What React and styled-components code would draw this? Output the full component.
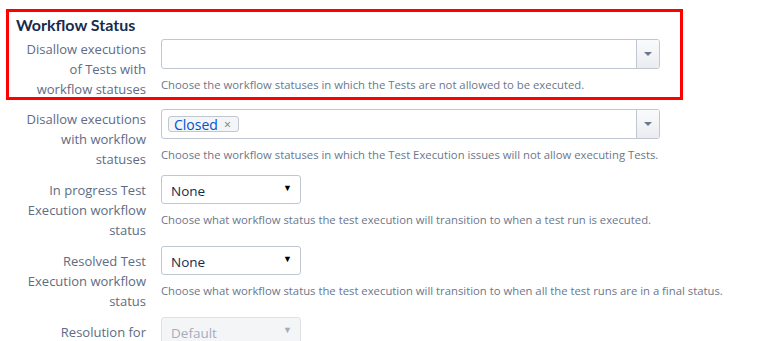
import styled, { createGlobalStyle } from "styled-components"

const GlobalStyle = createGlobalStyle`
  body {
    margin: 0;
    background: #fff;
    font-family: "Open Sans", "Liberation Sans", sans-serif;
    color: #172b4d;
  }
`;

const Form = styled.div`
  display: flex;
  flex-direction: column;
  gap: 6px;
  padding: 9px 0 0 9px;
  width: 780px;
  height: 341px;
  box-sizing: border-box;
  overflow: hidden;
`;

const Highlight = styled.div`
  box-sizing: border-box;
  width: 677px;
  height: 91px;
  margin: 0 0 3px -3px;
  border: 3px solid #ff0000;
`;

const Title = styled.h3`
  margin: 0;
  padding: 3px 0 0 7px;
  font-family: Lato, "Open Sans", sans-serif;
  font-size: 16px;
  font-weight: 700;
  line-height: 20px;
  color: #172b4d;
`;

const Row = styled.div`
  display: grid;
  grid-template-columns: 137px 499px;
  column-gap: 15px;
  margin-top: ${p => p.$top || 0}px;
`;

const Label = styled.label`
  text-align: right;
  font-size: 13px;
  line-height: 20px;
  color: #5e6c84;
  padding-top: ${p => (p.$select ? 5 : 0)}px;
`;

const Field = styled.div`
  display: flex;
  flex-direction: column;
  align-items: flex-start;
`;

const MultiSelect = styled.div`
  box-sizing: border-box;
  width: 499px;
  height: 30px;
  display: flex;
  align-items: center;
  border: 1px solid #c1c7d0;
  border-radius: 3px;
  background: #fff;
`;

const Tags = styled.div`
  flex: 1;
  display: flex;
  align-items: center;
  padding-left: 6px;
`;

const Tag = styled.span`
  display: inline-flex;
  align-items: center;
  gap: 6px;
  height: 16px;
  padding: 0 7px 0 5px;
  box-sizing: border-box;
  border: 1px solid #c1c7d0;
  border-radius: 3px;
  background: #f4f5f7;
  font-size: 14px;
  color: #0052cc;
`;

const TagClose = styled.span`
  font-size: 12px;
  color: #6b778c;
`;

const DropButton = styled.div`
  width: 22px;
  height: 100%;
  border-left: 1px solid #c1c7d0;
  background: linear-gradient(#fafbfc, #ebecf0);
  border-radius: 0 2px 2px 0;
  display: flex;
  align-items: center;
  justify-content: center;
`;

const Caret = styled.span`
  width: 0;
  height: 0;
  border-left: 4px solid transparent;
  border-right: 4px solid transparent;
  border-top: 4px solid #6b778c;
`;

const Select = styled.div`
  box-sizing: border-box;
  width: 140px;
  height: 29px;
  display: flex;
  align-items: center;
  justify-content: space-between;
  padding: 2px 8px 0 9px;
  border: 1px solid ${p => (p.$disabled ? "#dfe1e6" : "#c1c7d0")};
  border-radius: 3px;
  background: ${p => (p.$disabled ? "#f4f5f7" : "#fff")};
  font-size: 13.5px;
  color: ${p => (p.$disabled ? "#a5adba" : "#172b4d")};
`;

const SelectArrow = styled.span`
  font-size: 9px;
  margin-top: -6px;
  color: ${p => (p.$disabled ? "#a5adba" : "#000")};
`;

const Description = styled.div`
  margin-top: 8px;
  font-size: 11.3px;
  line-height: 16px;
  color: #6b778c;
  white-space: nowrap;
`;

const MultiRow = ({ label, tags = [], description, top }) => (
  <Row $top={top}>
    <Label>{label}</Label>
    <Field>
      <MultiSelect>
        <Tags>
          {tags.map(tag => (
            <Tag key={tag}>
              {tag}
              <TagClose>×</TagClose>
            </Tag>
          ))}
        </Tags>
        <DropButton>
          <Caret />
        </DropButton>
      </MultiSelect>
      {description && <Description>{description}</Description>}
    </Field>
  </Row>
);

const SelectRow = ({ label, value, description, disabled }) => (
  <Row>
    <Label $select>{label}</Label>
    <Field>
      <Select $disabled={disabled}>
        {value}
        <SelectArrow $disabled={disabled}>▼</SelectArrow>
      </Select>
      {description && <Description>{description}</Description>}
    </Field>
  </Row>
);

const App = () => {
  return (
    <>
      <GlobalStyle />
      <Form>
        <Highlight>
          <Title>Workflow Status</Title>
          <MultiRow
            top={4}
            label={<>Disallow executions<br />of Tests with<br />workflow statuses</>}
            description="Choose the workflow statuses in which the Tests are not allowed to be executed."
          />
        </Highlight>
        <MultiRow
          label={<>Disallow executions<br />with workflow<br />statuses</>}
          tags={["Closed"]}
          description="Choose the workflow statuses in which the Test Execution issues will not allow executing Tests."
        />
        <SelectRow
          label={<>In progress Test<br />Execution workflow<br />status</>}
          value="None"
          description="Choose what workflow status the test execution will transition to when a test run is executed."
        />
        <SelectRow
          label={<>Resolved Test<br />Execution workflow<br />status</>}
          value="None"
          description="Choose what workflow status the test execution will transition to when all the test runs are in a final status."
        />
        <SelectRow label="Resolution for" value="Default" disabled />
      </Form>
    </>
  )
}

export default App
